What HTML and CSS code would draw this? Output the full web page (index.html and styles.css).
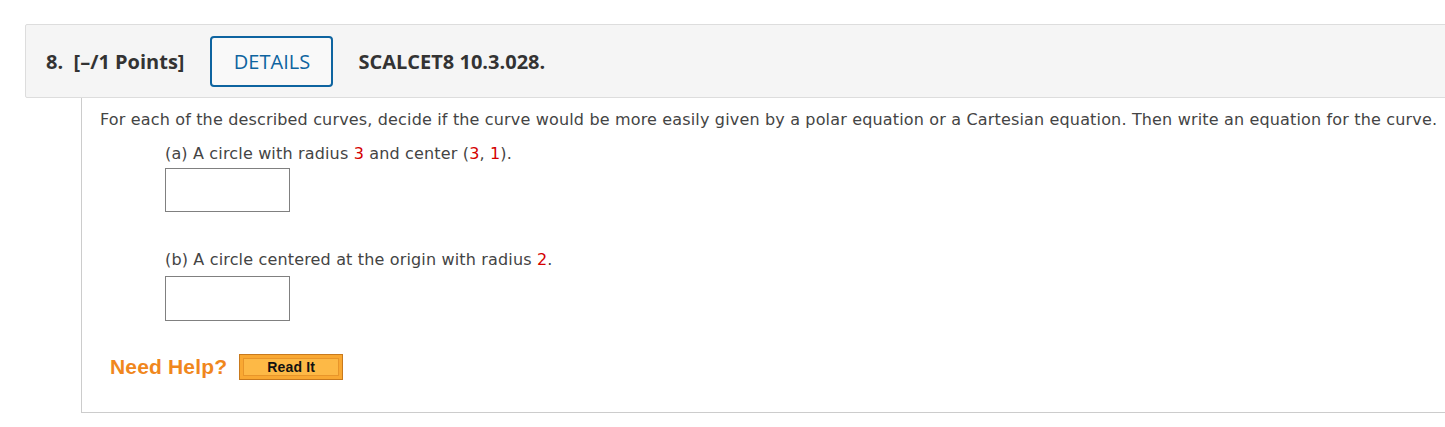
FILE: index.html
```html
<!DOCTYPE html>
<html>
<head>
<meta charset="utf-8">
<link rel="stylesheet" href="styles.css">
</head>
<body>
<div class="page">
  <div class="qhead">
    <span class="qnum">8.&nbsp;&nbsp;[–/1 Points]</span>
    <button class="details">DETAILS</button>
    <span class="qref">SCALCET8 10.3.028.</span>
  </div>
  <div class="qbody">
    <p class="intro">For each of the described curves, decide if the curve would be more easily given by a polar equation or a Cartesian equation. Then write an equation for the curve.</p>
    <div class="part">
      <p class="ptext">(a) A circle with radius <span class="red">3</span> and center (<span class="red">3</span>, <span class="red">1</span>).</p>
      <div class="answer"></div>
    </div>
    <div class="part partb">
      <p class="ptext">(b) A circle centered at the origin with radius <span class="red">2</span>.</p>
      <div class="answer answerb"></div>
    </div>
    <div class="help">
      <span class="needhelp">Need Help?</span>
      <span class="readit"><span class="readit-inner">Read It</span></span>
    </div>
  </div>
</div>
</body>
</html>
```
FILE: styles.css
```css
html, body {
  margin: 0;
  padding: 0;
  background: #fff;
  overflow: hidden;
}
.page {
  padding: 24px 0 0 25px;
}
.qhead {
  display: flex;
  align-items: center;
  height: 72px;
  margin-right: -20px;
  background: #f5f5f5;
  border: 1px solid #dddddd;
  border-radius: 2px;
  padding-left: 20px;
  font-family: "Open Sans", sans-serif;
  font-size: 20px;
  color: #333;
}
.qnum {
  font-weight: 700;
}
.details {
  margin-left: 26px;
  width: 123px;
  height: 51px;
  border: 2px solid #0e64a0;
  border-radius: 4px;
  background: #f9f9f9;
  color: #0e64a0;
  font-family: "Open Sans", sans-serif;
  font-size: 20px;
  padding: 0;
}
.qref {
  margin-left: 25px;
  font-weight: 700;
}
.qbody {
  margin-left: 56px;
  margin-right: -20px;
  border-left: 1px solid #cccccc;
  border-bottom: 1px solid #cccccc;
  padding: 10px 0 32px 18px;
  font-family: "DejaVu Sans", Verdana, sans-serif;
  font-size: 16px;
  letter-spacing: 0.16px;
  color: #444;
}
.intro {
  margin: 0;
  line-height: 24px;
  white-space: nowrap;
}
.part {
  margin-left: 65px;
}
.ptext {
  margin: 12px 0 0 0;
  line-height: 20px;
}
.partb .ptext {
  margin-top: 38px;
}
.answer {
  width: 123px;
  height: 42px;
  border: 1px solid #808080;
  margin-top: 4px;
  background: #fff;
}
.answerb {
  height: 43px;
  margin-top: 6px;
}
.red {
  color: #d40000;
}
.help {
  display: flex;
  align-items: center;
  margin-top: 33px;
  margin-left: 10px;
}
.needhelp {
  font-family: "Liberation Sans", Arial, sans-serif;
  font-weight: 700;
  font-size: 21px;
  color: #f0871d;
}
.readit {
  margin-left: 12px;
  width: 102px;
  height: 24px;
  border: 1px solid #c97a1d;
  background: #f9a832;
  display: flex;
  align-items: center;
  justify-content: center;
}
.readit-inner {
  width: 94px;
  height: 16px;
  border: 1px solid #e8952a;
  background: #fdb946;
  display: flex;
  align-items: center;
  justify-content: center;
  font-family: "Liberation Sans", Arial, sans-serif;
  font-weight: 700;
  font-size: 14px;
  color: #111;
}
```
